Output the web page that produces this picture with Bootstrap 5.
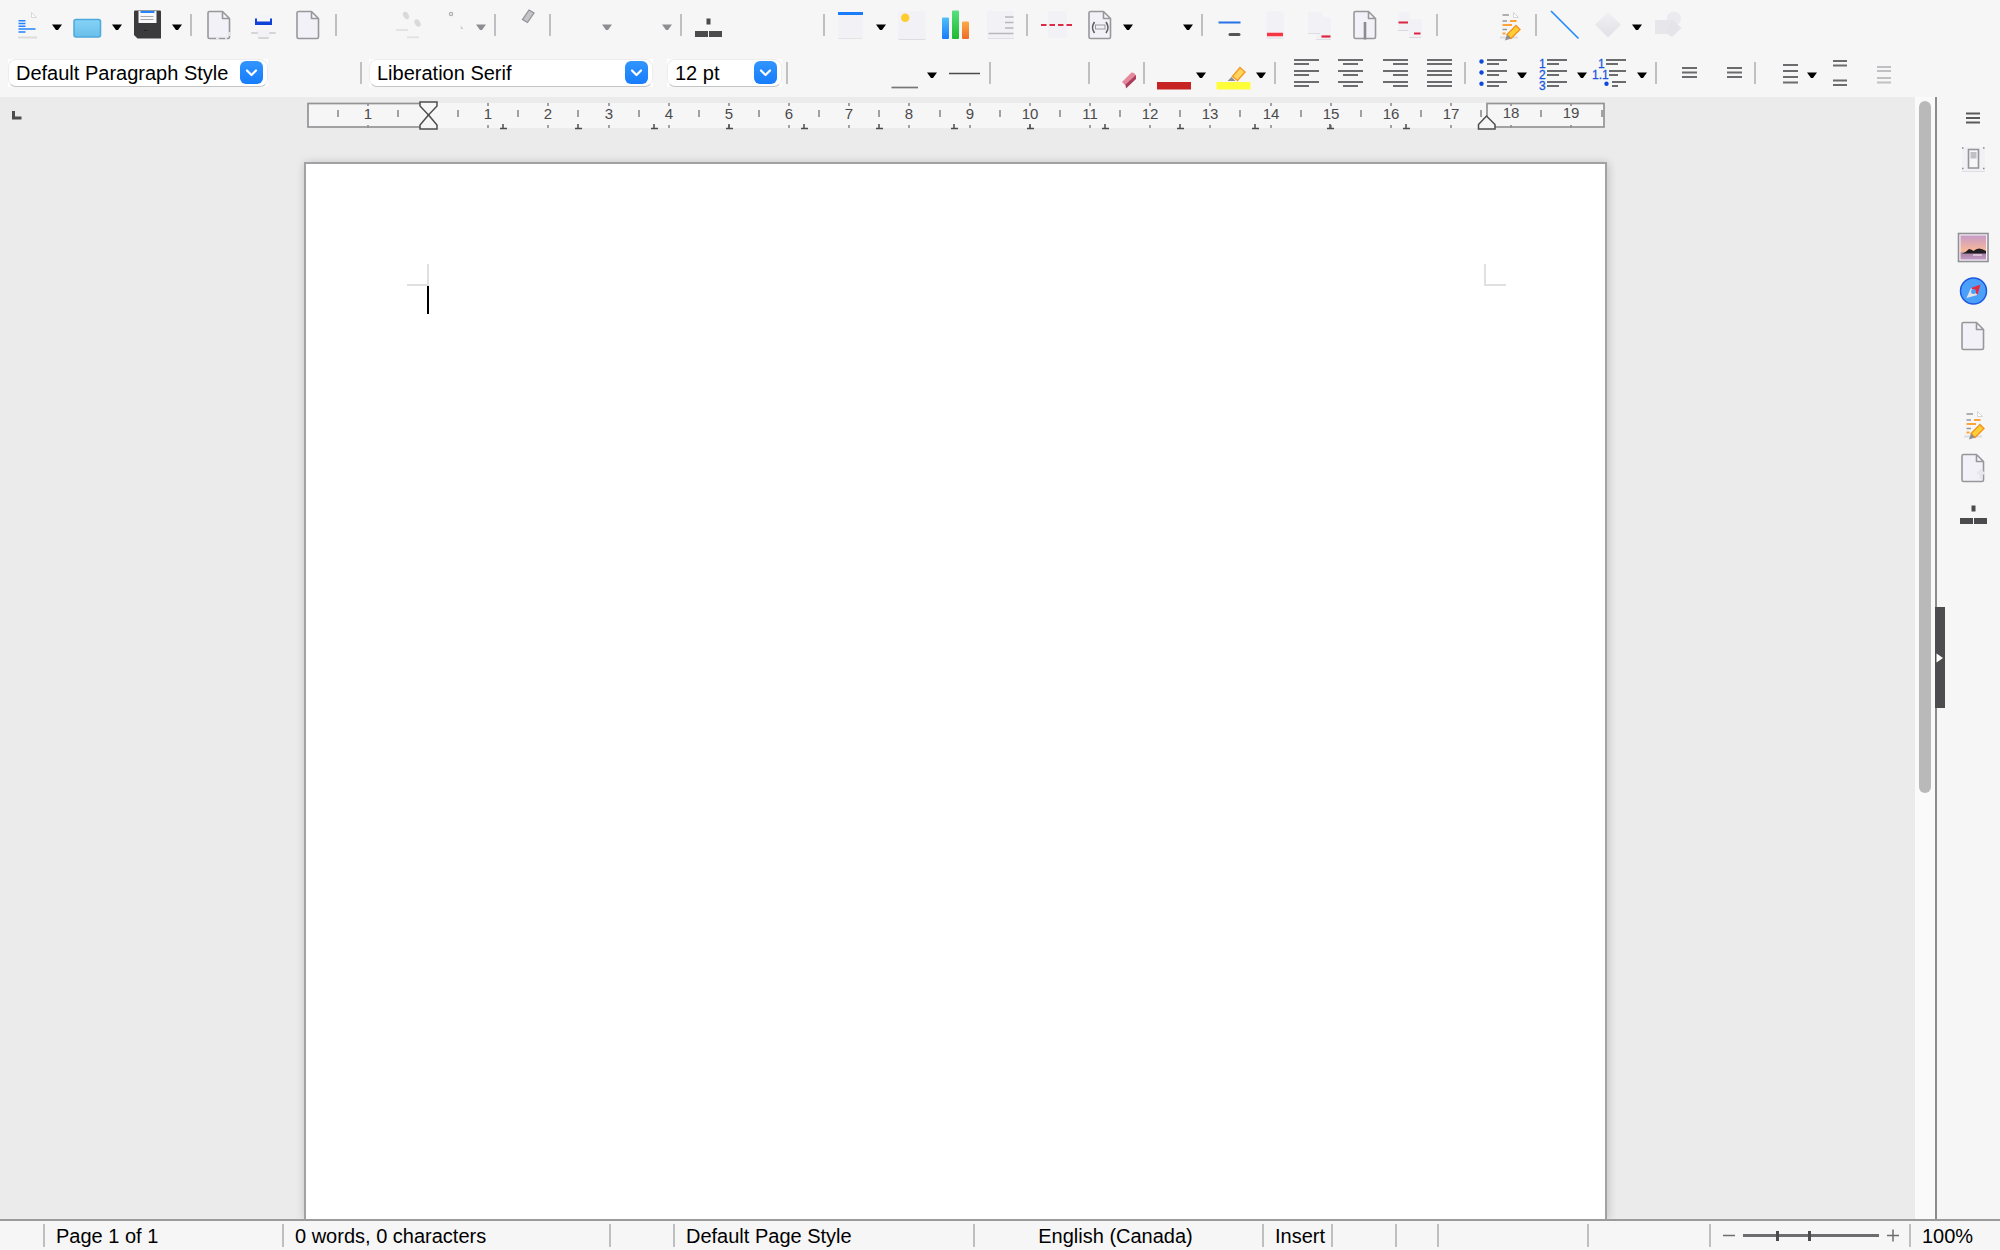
<!DOCTYPE html>
<html lang="en">
<head>
<meta charset="utf-8">
<meta name="viewport" content="width=device-width, initial-scale=1">
<title>Untitled 1 - Writer</title>
<link href="https://cdn.jsdelivr.net/npm/bootstrap@5.3.0/dist/css/bootstrap.min.css" rel="stylesheet">
<style>
body{font-family:"Liberation Sans",Arial,sans-serif;font-size:20px;line-height:24px;color:#000;background:#f6f6f6}
main{min-height:0}
.toolbars{padding:5px 0 4px;gap:8px}
.tool-row{height:40px}
.tool-row.first{padding-left:6px}
.tool-row.second{padding-left:8px}
.spread{gap:1px}
.tool{width:44px;height:40px;padding:0;border:0;background:none;flex:none;display:block}
.tool svg{display:block;fill:none}
.drop{width:16px;height:40px;padding:0;border:0;background:none;flex:none}
.drop svg{display:block;fill:#000}
.drop:disabled svg{fill:#8e8e92}
.divide{width:11px;height:22px;flex:none;background:linear-gradient(#c0c0c4,#c0c0c4) 4px 0/2px 100% no-repeat}
.combo{height:28px;flex:none;background:#fff}
.combo select{appearance:none;width:100%;height:28px;padding:0 30px 1px 7px;border:1px solid #ececec;border-bottom:1px solid #c4c4c4;border-radius:8px;background:#fff;color:#000;line-height:24px}
.combo svg{right:5px;top:2px;pointer-events:none}
.combo-style{width:260px}
.combo-font{width:284px}
.combo-size{width:115px}
.divide+.combo{margin-left:2px}
.combo+.combo{margin-left:14px}
.canvas-area{background:#ebebeb;min-width:0}
.doc-column{padding-right:4px}
.tab-kind{left:12px;top:14px}
.ruler{height:36px;padding-top:4px;width:1303px}
.ruler svg{display:block;overflow:visible;font-size:15px}
.sheet{width:1303px;margin-top:29px;border:2px solid #a2a2a4;border-bottom:0;background:#fff;box-shadow:1px 1px 9px rgba(0,0,0,.2);padding:100px 99px 0 101px}
.crop-mark{width:22px;height:22px;border:0 solid #e0e0e0;border-bottom-width:2px}
.crop-mark.start{border-right-width:2px}
.crop-mark.end{border-left-width:2px}
.caret{width:2px;height:28px;background:#000;margin-left:20px}
.scroll-track{width:20px;background:#fafafa;padding:4px 4px 0}
.scroll-thumb{width:12px;height:61.9%;border-radius:6px;background:#b9b9b9}
.deck{width:65px;border-left:2px solid #8c8c8e;padding:1px 0 0 8px}
.deck-tabs{gap:4px;margin-top:1px}
.deck-handle{left:-2px;top:510px;width:10px;height:101px;border:0;padding:0;background:#4d4d4f}
.status{display:grid;grid-template-columns:43fr 239fr 327fr 64fr 300fr 289fr 69fr 64fr 42fr 150fr 122fr 200fr 91fr;height:31px;border-top:2px solid #9b9b9d;padding:3px 0}
.status>div{height:23px;white-space:nowrap;padding-left:11px;line-height:24px}
.status>div+div{border-left:2px solid #bfbfc3}
.status>.lang{padding:0 6px 0 0}
.zoom-btn{width:14px;height:22px;border:0;padding:0;background:none}
.zoom-range{appearance:none;width:136px;height:12px;margin:0 7px;background:linear-gradient(#4d4d4f,#4d4d4f) 33px 50%/3px 10px no-repeat,linear-gradient(#6d6d70,#6d6d70) 0 50%/100% 3px no-repeat}
.zoom-range::-webkit-slider-thumb{appearance:none;width:3px;height:10px;background:#4d4d4f}
.ln{stroke:#6c6c6e;stroke-width:2}
.pg{fill:#f2f1f7;stroke:#98989c;stroke-width:1.6;stroke-linejoin:round}
.soft{fill:#f1f1f6}
.num{fill:#1a56e0;stroke:#1a56e0;stroke-width:.3;font-size:12px}
</style>
</head>
<body class="vh-100 d-flex flex-column overflow-hidden">
<svg width="0" height="0" class="position-absolute" aria-hidden="true">
  <defs>
    <linearGradient id="gFolder" x2="0" y2="1"><stop stop-color="#86d2f6"/><stop offset="1" stop-color="#68bfea"/></linearGradient>
    <linearGradient id="gBlue" x2="0" y2="1"><stop stop-color="#4fc0f8"/><stop offset="1" stop-color="#1a7bfb"/></linearGradient>
    <linearGradient id="gGreen" x2="0" y2="1"><stop stop-color="#56e07c"/><stop offset="1" stop-color="#1fb932"/></linearGradient>
    <linearGradient id="gOrange" x2="0" y2="1"><stop stop-color="#fbab45"/><stop offset="1" stop-color="#ee6a2a"/></linearGradient>
    <linearGradient id="gBtn" x2="0" y2="1"><stop stop-color="#3295ff"/><stop offset="1" stop-color="#167cfb"/></linearGradient>
    <linearGradient id="gShape" x2="0" y2="1"><stop stop-color="#f0f0f4"/><stop offset="1" stop-color="#e0e0e6"/></linearGradient>
    <linearGradient id="gSky" x2="0" y2="1"><stop stop-color="#c79bc8"/><stop offset=".65" stop-color="#f9b896"/><stop offset=".75" stop-color="#a986a8"/><stop offset="1" stop-color="#c49ac4"/></linearGradient>
    <symbol id="arrow" viewBox="0 0 16 40"><path d="M2 19.500h10l-4 5.500h-2z"/></symbol>
    <symbol id="chev" viewBox="0 0 23 23"><rect width="23" height="23" rx="6" fill="url(#gBtn)"/><path d="M7 9.500l4.500 4.500L16 9.500" fill="none" stroke="#fff" stroke-width="2.200" stroke-linecap="round" stroke-linejoin="round"/></symbol>
    <symbol id="page" viewBox="0 0 44 40"><path class="pg" d="M12.500 6.500H25.500L32.500 13.500V32Q32.500 33.500 31 33.500H12.500Q11 33.500 11 32V8Q11 6.500 12.500 6.500zM25.500 6.500V13.500H32.500"/></symbol>
    <symbol id="tree" viewBox="0 0 44 40"><path fill="#4b4b4d" d="M19.500 13.500h4v6h-4zM8 26h13v6H8zM22 26h13v6H22z"/></symbol>
    <symbol id="track" viewBox="0 0 44 40"><path d="M13 32.500h18" stroke="#dcdce0" stroke-width="2"/><path d="M26.500 7.500v5h5z" fill="#fff" stroke="#d4d4d8"/><path d="M15.500 10H22M15.500 16H20M15.500 24.500H20" stroke="#98989c" stroke-width="1.600"/><path d="M23 16h6.500M15.500 20H25M15.500 28.500h3" stroke="#fda33a" stroke-width="1.800"/><path d="M20 29.500L29 20.500l4 4-9 9z" fill="#ffce35" stroke="#f39420" stroke-width="1.400"/><path d="M20 29.500l4 4-6 2z" fill="#8d8d92"/></symbol>
  </defs>
</svg>

<header class="toolbars d-flex flex-column flex-shrink-0">
  <div class="tool-row first d-flex align-items-center" role="toolbar" aria-label="Standard">
    <div class="d-flex">
      <button class="tool" aria-label="New"><svg width="44" height="40"><path d="M25.500 7.500v5h5z" fill="#fff" stroke="#d8d8dc"/><path d="M12.500 15.700h7M12.500 18.500h7M12.500 21.300h7M12.500 24h17M12.500 27h7" stroke="#2684fb" stroke-width="1.500"/><path d="M12 32.500h19" stroke="#dcdcdf" stroke-width="2"/></svg></button><button class="drop" aria-label="New options"><svg width="16" height="40"><use href="#arrow"/></svg></button>
      <button class="tool" aria-label="Open"><svg width="44" height="40"><rect x="8" y="14.500" width="26.500" height="17.500" rx="2" fill="url(#gFolder)" stroke="#4da8dc" stroke-width="1.500"/></svg></button><button class="drop" aria-label="Open options"><svg width="16" height="40"><use href="#arrow"/></svg></button>
      <button class="tool" aria-label="Save"><svg width="44" height="40"><path d="M9 5.500H34q1 0 1 1v27H11.500L8 30V6.500q0-1 1-1z" fill="#3b3b3d"/><path d="M12.500 6h18v12h-18z" fill="#f8f8fa"/><path d="M14.500 7h14" stroke="#2684fb" stroke-width="2"/><path d="M14.500 11.500h13M14.500 14.500h13" stroke="#a8a8ac" stroke-width="1.200"/><path d="M18 25.500h3" stroke="#222"/></svg></button><button class="drop" aria-label="Save options"><svg width="16" height="40"><use href="#arrow"/></svg></button>
    </div>
    <div class="divide"></div>
    <div class="d-flex spread">
      <button class="tool" aria-label="Export"><svg width="44" height="40"><use href="#page"/><path d="M19 33.500h3M28 33.500h2M32.500 27v4" stroke="#e6e6ea" stroke-width="2.400"/></svg></button>
      <button class="tool" aria-label="Print"><svg width="44" height="40"><path d="M15 10h13v4H15z" fill="#f3f3f7"/><path d="M13 13.500h2v3h13v-3h2V20H13z" fill="#1041d8"/><path d="M15 25h13v8H15z" fill="#f1f1f6"/><path d="M10 28h5M28 28h5M17 33h9" stroke="#d5d5d9" stroke-width="2" stroke-linecap="round"/></svg></button>
      <button class="tool" aria-label="Preview"><svg width="44" height="40"><use href="#page" x="-1"/></svg></button>
    </div>
    <div class="divide"></div>
    <div class="d-flex">
      <button class="tool" aria-label="Cut" disabled></button>
      <button class="tool" aria-label="Copy" disabled><svg width="44" height="40"><ellipse cx="20" cy="10.500" rx="2.700" ry="4" transform="rotate(-30 20 10.500)" fill="#d9d9db"/><ellipse cx="31.500" cy="18" rx="2.700" ry="4" transform="rotate(-30 31.500 18)" fill="#d9d9db"/><path d="M10 25h12M21 32.300h12" stroke="#e3e3e5" stroke-width="2"/></svg></button>
      <button class="tool" aria-label="Paste" disabled><svg width="44" height="40"><circle cx="21" cy="9" r="1.600" stroke="#b0b0b4" stroke-width="1.300"/><path d="M30.500 20.500l3 3.500h-2.500z" fill="#c8c8cb"/></svg></button><button class="drop" aria-label="Paste options" disabled><svg width="16" height="40"><use href="#arrow"/></svg></button>
    </div>
    <div class="divide"></div>
    <button class="tool" aria-label="Clone formatting"><svg width="44" height="40"><path d="M28 5l5 3-6.500 9.500-5-3z" fill="#c5c5c9" stroke="#939397" stroke-width="1.300"/></svg></button>
    <div class="divide"></div>
    <div class="d-flex">
      <button class="tool" aria-label="Undo" disabled></button><button class="drop" aria-label="Undo steps" disabled><svg width="16" height="40"><use href="#arrow"/></svg></button>
      <button class="tool" aria-label="Redo" disabled></button><button class="drop" aria-label="Redo steps" disabled><svg width="16" height="40"><use href="#arrow"/></svg></button>
    </div>
    <div class="divide"></div>
    <div class="d-flex">
      <button class="tool" aria-label="Navigator"><svg width="44" height="40"><use href="#tree"/></svg></button>
      <button class="tool" aria-label="Spelling"></button>
      <button class="tool" aria-label="Marks"></button>
    </div>
    <div class="divide"></div>
    <div class="d-flex">
      <button class="tool" aria-label="Table"><svg width="44" height="40"><path class="soft" d="M8.500 9h24v24h-24z"/><path d="M8.500 33.500h24" stroke="#e4e4e7"/><path d="M8 8.500h25" stroke="#1a7cfb" stroke-width="3"/></svg></button><button class="drop" aria-label="Table options"><svg width="16" height="40"><use href="#arrow"/></svg></button>
      <button class="tool" aria-label="Image"><svg width="44" height="40"><path class="soft" d="M8.500 6h27v28h-27z"/><path d="M8.500 34.500h27" stroke="#dedee2"/><circle cx="15.200" cy="12.700" r="4.200" fill="#ffcb2e"/></svg></button>
      <button class="tool" aria-label="Chart"><svg width="44" height="40"><rect x="8" y="12.500" width="7" height="21.500" rx="1" fill="url(#gBlue)"/><rect x="18" y="5.500" width="7" height="28.500" rx="1" fill="url(#gGreen)"/><rect x="28" y="16.500" width="7" height="17.500" rx="1" fill="url(#gOrange)"/></svg></button>
      <button class="tool" aria-label="Text box"><svg width="44" height="40"><path class="soft" d="M9 6h27v27H9z"/><path d="M27 12h8.500M27 17.500h8.500M27 23h8.500M10.500 28.500h25" stroke="#b8b8bc" stroke-width="1.600"/><path d="M10 33.500h26" stroke="#e0e0e4"/></svg></button>
    </div>
    <div class="divide"></div>
    <div class="d-flex">
      <button class="tool" aria-label="Page break"><svg width="44" height="40"><path class="soft" d="M15 6.500h19v26H15z"/><path d="M8 20h31" stroke="#db2b48" stroke-width="2" stroke-dasharray="5.500 3"/></svg></button>
      <button class="tool" aria-label="Field"><svg width="44" height="40"><use href="#page" x="1"/><rect x="18.500" y="20" width="9.500" height="4" stroke="#98989c"/><path d="M17.500 17q-4 5.500 0 11M29 17q4 5.500 0 11" stroke="#5c5c60" stroke-width="1.600"/></svg></button><button class="drop" aria-label="Field options"><svg width="16" height="40"><use href="#arrow"/></svg></button>
      <button class="tool" aria-label="Special character"></button><button class="drop" aria-label="Special character options"><svg width="16" height="40"><use href="#arrow"/></svg></button>
    </div>
    <div class="divide"></div>
    <div class="d-flex spread">
      <button class="tool" aria-label="Footnote"><svg width="44" height="40"><path d="M10.500 17.500h22" stroke="#2672e8" stroke-width="2"/><path d="M22 29.500h9" stroke="#555558" stroke-width="3" stroke-linecap="round"/></svg></button>
      <button class="tool" aria-label="Endnote"><svg width="44" height="40"><path class="soft" d="M13.500 6.500h17v27h-17z"/><path d="M14 33h16" stroke="#e2e2e5"/><path d="M14 29.500h16" stroke="#f83540" stroke-width="3.500"/></svg></button>
      <button class="tool" aria-label="Bookmark"><svg width="44" height="40"><path class="soft" d="M10 7h15v22H10zM18 12h15v22H18z"/><path d="M10 28.500h12M18 34.500h15" stroke="#dedee2"/><path d="M23.500 31.500h9" stroke="#dd2540" stroke-width="2.200"/></svg></button>
      <button class="tool" aria-label="Cross-reference"><svg width="44" height="40"><use href="#page"/><path d="M22 17v17.500" stroke="#8b8b90" stroke-width="2.600"/></svg></button>
      <button class="tool" aria-label="Comment"><svg width="44" height="40"><path class="soft" d="M10 7h12v19H10zM21 14h13v19H21z"/><path d="M10 25.500h10M21 32.500h12" stroke="#dadade"/><path d="M10.500 17.500h9.500M26 28.500h6.500" stroke="#dd2540" stroke-width="1.900"/></svg></button>
    </div>
    <div class="divide"></div>
    <div class="d-flex">
      <button class="tool" aria-label="Insert comment"></button>
      <button class="tool" aria-label="Track changes"><svg width="44" height="40"><use href="#track"/></svg></button>
    </div>
    <div class="divide"></div>
    <div class="d-flex">
      <button class="tool" aria-label="Line"><svg width="44" height="40"><path d="M9 6l27.500 27.500" stroke="#2a8bfb" stroke-width="1.700"/></svg></button>
      <button class="tool" aria-label="Shapes"><svg width="44" height="40"><path d="M22 7l13 12.700L22 32.500 9 19.700z" fill="url(#gShape)"/></svg></button><button class="drop" aria-label="Shape options"><svg width="16" height="40"><use href="#arrow"/></svg></button>
      <button class="tool" aria-label="Draw functions"><svg width="44" height="40"><circle cx="28" cy="13.500" r="7" fill="#ebebef"/><path d="M9 15h15v14H9z" fill="#e6e6eb"/><path d="M26 14l9.500 9-9.500 9-6-4z" fill="#e4e4e9"/></svg></button>
    </div>
  </div>

  <div class="tool-row second d-flex align-items-center" role="toolbar" aria-label="Formatting">
    <div class="combo combo-style position-relative"><select aria-label="Paragraph style"><option>Default Paragraph Style</option></select><svg class="position-absolute" width="23" height="23"><use href="#chev"/></svg></div>
    <button class="tool" aria-label="Update style"></button>
    <button class="tool" aria-label="New style"></button>
    <div class="divide"></div>
    <div class="combo combo-font position-relative"><select aria-label="Font name"><option>Liberation Serif</option></select><svg class="position-absolute" width="23" height="23"><use href="#chev"/></svg></div>
    <div class="combo combo-size position-relative"><select aria-label="Font size"><option>12 pt</option></select><svg class="position-absolute" width="23" height="23"><use href="#chev"/></svg></div>
    <div class="divide"></div>
    <div class="d-flex">
      <button class="tool" aria-label="Bold"></button>
      <button class="tool" aria-label="Italic"></button>
      <button class="tool" aria-label="Underline"><svg width="44" height="40"><path d="M10.500 34.500h26.500" stroke="#77777a" stroke-width="1.700"/></svg></button><button class="drop" aria-label="Underline options"><svg width="16" height="40"><use href="#arrow"/></svg></button>
      <button class="tool" aria-label="Strikethrough"><svg width="44" height="40"><path d="M8 20.500h31" stroke="#4b4b4d" stroke-width="1.500"/></svg></button>
    </div>
    <div class="divide"></div>
    <div class="d-flex">
      <button class="tool" aria-label="Superscript"></button>
      <button class="tool" aria-label="Subscript"></button>
    </div>
    <div class="divide"></div>
    <button class="tool" aria-label="Clear formatting"><svg width="44" height="40"><path d="M27 29l9.500-9.500q3-.5 4.500 3L31 33z" fill="#e48a9c"/><path d="M30.500 31.500L41 22v4L31 35.500z" fill="#a93d5c"/></svg></button>
    <div class="divide"></div>
    <div class="d-flex">
      <button class="tool" aria-label="Font color"><svg width="44" height="40"><path d="M7 29h34v7.500H7z" fill="#c72323"/></svg></button><button class="drop" aria-label="Font color options"><svg width="16" height="40"><use href="#arrow"/></svg></button>
      <button class="tool" aria-label="Highlighting"><svg width="44" height="40"><path d="M6.500 29h34v7.500h-34z" fill="#fdfd3a"/><path d="M30 14.500l5 4.500-7.500 8.500-5-4z" fill="#ffd659" stroke="#f79a2c" stroke-width="1.500"/><path d="M21.500 24l4 4H17.500z" fill="#8d8d91"/></svg></button><button class="drop" aria-label="Highlighting options"><svg width="16" height="40"><use href="#arrow"/></svg></button>
    </div>
    <div class="divide"></div>
    <div class="d-flex spread">
      <button class="tool" aria-label="Align left"><svg width="44" height="40"><path class="ln" d="M13 7h25M13 11h15M13 18h25M13 22h15M13 29h25M13 33h15"/></svg></button>
      <button class="tool" aria-label="Align center"><svg width="44" height="40"><path class="ln" d="M12 7h25M17 11h15M12 18h25M17 22h15M12 29h25M17 33h15"/></svg></button>
      <button class="tool" aria-label="Align right"><svg width="44" height="40"><path class="ln" d="M12 7h25M22 11h15M12 18h25M22 22h15M12 29h25M22 33h15"/></svg></button>
      <button class="tool" aria-label="Justify"><svg width="44" height="40"><path class="ln" d="M11 7h25M11 11h25M11 18h25M11 22h25M11 29h25M11 33h25"/></svg></button>
    </div>
    <div class="divide"></div>
    <div class="d-flex">
      <button class="tool" aria-label="Bullets"><svg width="44" height="40"><path class="ln" d="M16 7h20M16 11h12M16 18h20M16 22h12M16 29h20M16 33h12"/><g fill="#1048dc"><circle cx="10.500" cy="8.500" r="2.200"/><circle cx="10.500" cy="19.500" r="2.200"/><circle cx="10.500" cy="30.700" r="2.200"/></g></svg></button><button class="drop" aria-label="Bullet options"><svg width="16" height="40"><use href="#arrow"/></svg></button>
      <button class="tool" aria-label="Numbering"><svg width="44" height="40"><path class="ln" d="M16 7h20M16 11h12M16 18h20M16 22h12M16 29h20M16 33h12"/><g class="num"><text x="8" y="15">1</text><text x="8" y="26">2</text><text x="8" y="37">3</text></g></svg></button><button class="drop" aria-label="Numbering options"><svg width="16" height="40"><use href="#arrow"/></svg></button>
      <button class="tool" aria-label="Outline"><svg width="44" height="40"><path class="ln" d="M15 7h20M15 11h12M18 18h17M18 22h9M21 29h14M21 33h6"/><g class="num"><text x="7" y="15">1</text><text x="1" y="26">1.1</text></g><circle cx="15.500" cy="30.700" r="2.200" fill="#1048dc"/></svg></button><button class="drop" aria-label="Outline options"><svg width="16" height="40"><use href="#arrow"/></svg></button>
    </div>
    <div class="divide"></div>
    <div class="d-flex">
      <button class="tool" aria-label="Increase indent"><svg width="44" height="40"><path class="ln" d="M20 15h15M20 19.500h15M20 24h15"/></svg></button>
      <button class="tool" aria-label="Decrease indent"><svg width="44" height="40"><path class="ln" d="M21 15h15M21 19.500h15M21 24h15"/></svg></button>
    </div>
    <div class="divide"></div>
    <div class="d-flex">
      <button class="tool" aria-label="Line spacing"><svg width="44" height="40"><path class="ln" d="M22 12h15M22 18h15M22 24h15M22 29.500h15"/></svg></button><button class="drop" aria-label="Line spacing options"><svg width="16" height="40"><use href="#arrow"/></svg></button>
      <button class="tool" aria-label="Increase paragraph spacing"><svg width="44" height="40"><path class="ln" d="M12 8h14M12 12.500h14M12 27.500h14M12 32h14"/></svg></button>
      <button class="tool" aria-label="Decrease paragraph spacing" disabled><svg width="44" height="40"><path stroke="#c0c0c3" stroke-width="1.800" d="M12 14h14M12 18h14M12 25h14M12 29.500h14"/></svg></button>
    </div>
  </div>
</header>

<main class="d-flex flex-grow-1">
  <div class="canvas-area position-relative flex-grow-1 overflow-hidden">
    <svg class="tab-kind position-absolute" width="10" height="9"><path d="M1.500 0v7H9.500" fill="none" stroke="#4d4d4f" stroke-width="3"/></svg>
    <div class="doc-column d-flex flex-column align-items-center h-100">
      <div class="ruler flex-shrink-0"><svg id="ruler" width="1303" height="30" aria-label="Ruler"></svg></div>
      <div class="sheet flex-grow-1 flex-shrink-0">
        <div class="d-flex justify-content-between"><div class="crop-mark start"></div><div class="crop-mark end"></div></div>
        <div class="caret"></div>
      </div>
    </div>
  </div>
  <div class="scroll-track flex-shrink-0"><div class="scroll-thumb"></div></div>
  <aside class="deck position-relative flex-shrink-0 d-flex flex-column align-items-center">
    <button class="deck-handle position-absolute" aria-label="Hide sidebar"><svg width="10" height="14" class="d-block"><path d="M1.500 2.500l6.500 4.500-6.500 4.500z" fill="#fff"/></svg></button>
    <button class="tool" aria-label="Sidebar settings"><svg width="44" height="40"><path d="M15 15.500h14M15 20h14M15 24.500h14" stroke="#5a5a5c" stroke-width="1.800"/></svg></button>
    <nav class="deck-tabs d-flex flex-column" aria-label="Sidebar decks">
      <button class="tool" aria-label="Properties"><svg width="44" height="40"><path d="M11 8h23v24H11z" fill="#f1f1f6"/><path d="M11 32.500h23" stroke="#dedee2"/><path d="M11 9h1.500M32 9h1.500M11 29.500h1.500M32 29.500h1.500" stroke="#88888c" stroke-width="1.300"/><path d="M17.500 10.500h10v18.500h-10z" fill="#f6f6f9" stroke="#949498" stroke-width="1.600"/><path d="M19.500 13h6v6.500h-6z" fill="#c0c0c5"/></svg></button>
      <button class="tool" aria-label="Styles"></button>
      <button class="tool" aria-label="Gallery"><svg width="44" height="40"><rect x="7.500" y="6.500" width="29.500" height="28" fill="#f6f0f6" stroke="#929296" stroke-width="1.600"/><path d="M9.500 8.500h25.500v24H9.500z" fill="url(#gSky)"/><path d="M11 26.500q4-1 7-4.500 3 .5 4.500 2 5-5 12.500 0v2.500z" fill="#201c22"/><path d="M22 28h9" stroke="#e8cfe4" stroke-width="1.500"/></svg></button>
      <button class="tool" aria-label="Navigator"><svg width="44" height="40"><circle cx="22.500" cy="20" r="13" fill="#4ba1fa" stroke="#1d58e0" stroke-width="1.500"/><path d="M29.500 13.500l-3 10.500-6.500-7z" fill="#e62c3c"/><path d="M15.500 27l4.500-10 6.500 7z" fill="#e3e3e7"/><circle cx="22.500" cy="20.500" r="2.500" fill="#4ba1fa"/></svg></button>
      <button class="tool" aria-label="Page"><svg width="44" height="40"><use href="#page" y="1"/></svg></button>
      <button class="tool" aria-label="Style inspector"></button>
      <button class="tool" aria-label="Manage changes"><svg width="44" height="40"><use href="#track" y="1"/></svg></button>
      <button class="tool" aria-label="Design"><svg width="44" height="40"><use href="#page" y="1"/><path d="M26 26h8M30 22v10" stroke="#e6e6eb" stroke-width="3"/></svg></button>
      <button class="tool" aria-label="Accessibility check"><svg width="44" height="40"><use href="#tree" x="1" y="1"/></svg></button>
    </nav>
  </aside>
</main>

<footer class="status flex-shrink-0">
  <div></div>
  <div>Page 1 of 1</div>
  <div>0 words, 0 characters</div>
  <div></div>
  <div>Default Page Style</div>
  <div class="lang text-center">English (Canada)</div>
  <div>Insert</div>
  <div></div><div></div><div></div><div></div>
  <div class="d-flex align-items-center">
    <button class="zoom-btn" aria-label="Zoom out"><svg class="d-block" width="14" height="22"><path d="M1 10.500h12" stroke="#6d6d70" stroke-width="1.500"/></svg></button>
    <input class="zoom-range" type="range" min="0" max="100" value="49" aria-label="Zoom">
    <button class="zoom-btn" aria-label="Zoom in"><svg class="d-block" width="14" height="22"><path d="M1 10.500h12M7 4.500v12" stroke="#6d6d70" stroke-width="1.500"/></svg></button>
  </div>
  <div>100%</div>
</footer>

<script src="https://cdn.jsdelivr.net/npm/bootstrap@5.3.0/dist/js/bootstrap.bundle.min.js"></script>
<script>
// Ruler: centimetre marks, half marks, tab stops and the two margin boxes
(function () {
  const zero = 124, unit = 60.18, left = 4, right = 1300, textEnd = 1183;
  let s = `<rect x="${left}" y="2" width="${right - left}" height="25" fill="#f6f6f6"/>`;
  for (let i = -3; i <= 39; i++) {
    const x = Math.round(zero + i * unit / 2);
    if (i === 0) continue;
    if (i % 2) {
      s += `<path d="M${x} 9v7" stroke="#858588" stroke-width="1.500"/>`;
    } else {
      const n = Math.abs(i / 2);
      s += `<path d="M${x} 2v3M${x} 24v3" stroke="#858588" stroke-width="1.500"/>`;
      s += `<text x="${x}" y="${n > 17 ? 17 : 18}" text-anchor="middle" fill="#4a4a4c">${n}</text>`;
    }
  }
  for (let x = zero + 75.2; x < textEnd - 20; x += 75.2) {
    const t = Math.round(x);
    s += `<path d="M${t} 23v5M${t - 3} 27.500h7" stroke="#4d4d4f" stroke-width="1.500"/>`;
  }
  s += `<g fill="none" stroke="#939396" stroke-width="1.700"><rect x="${left}" y="2.500" width="${zero - left}" height="23.500"/><rect x="${textEnd}" y="2.500" width="${right - textEnd}" height="23.500"/></g>`;
  s += `<g fill="#f6f6f6" stroke="#4d4d4f" stroke-width="1.500"><path d="M116 1h17v4l-8.500 9L116 5z"/><path d="M116 28h17v-4l-8.500-10L116 24z"/><path d="M1174.500 28h16.500v-4.500l-8.500-8.500-8 8.500z"/></g>`;
  document.getElementById('ruler').innerHTML = s;
})();
</script>
</body>
</html>
